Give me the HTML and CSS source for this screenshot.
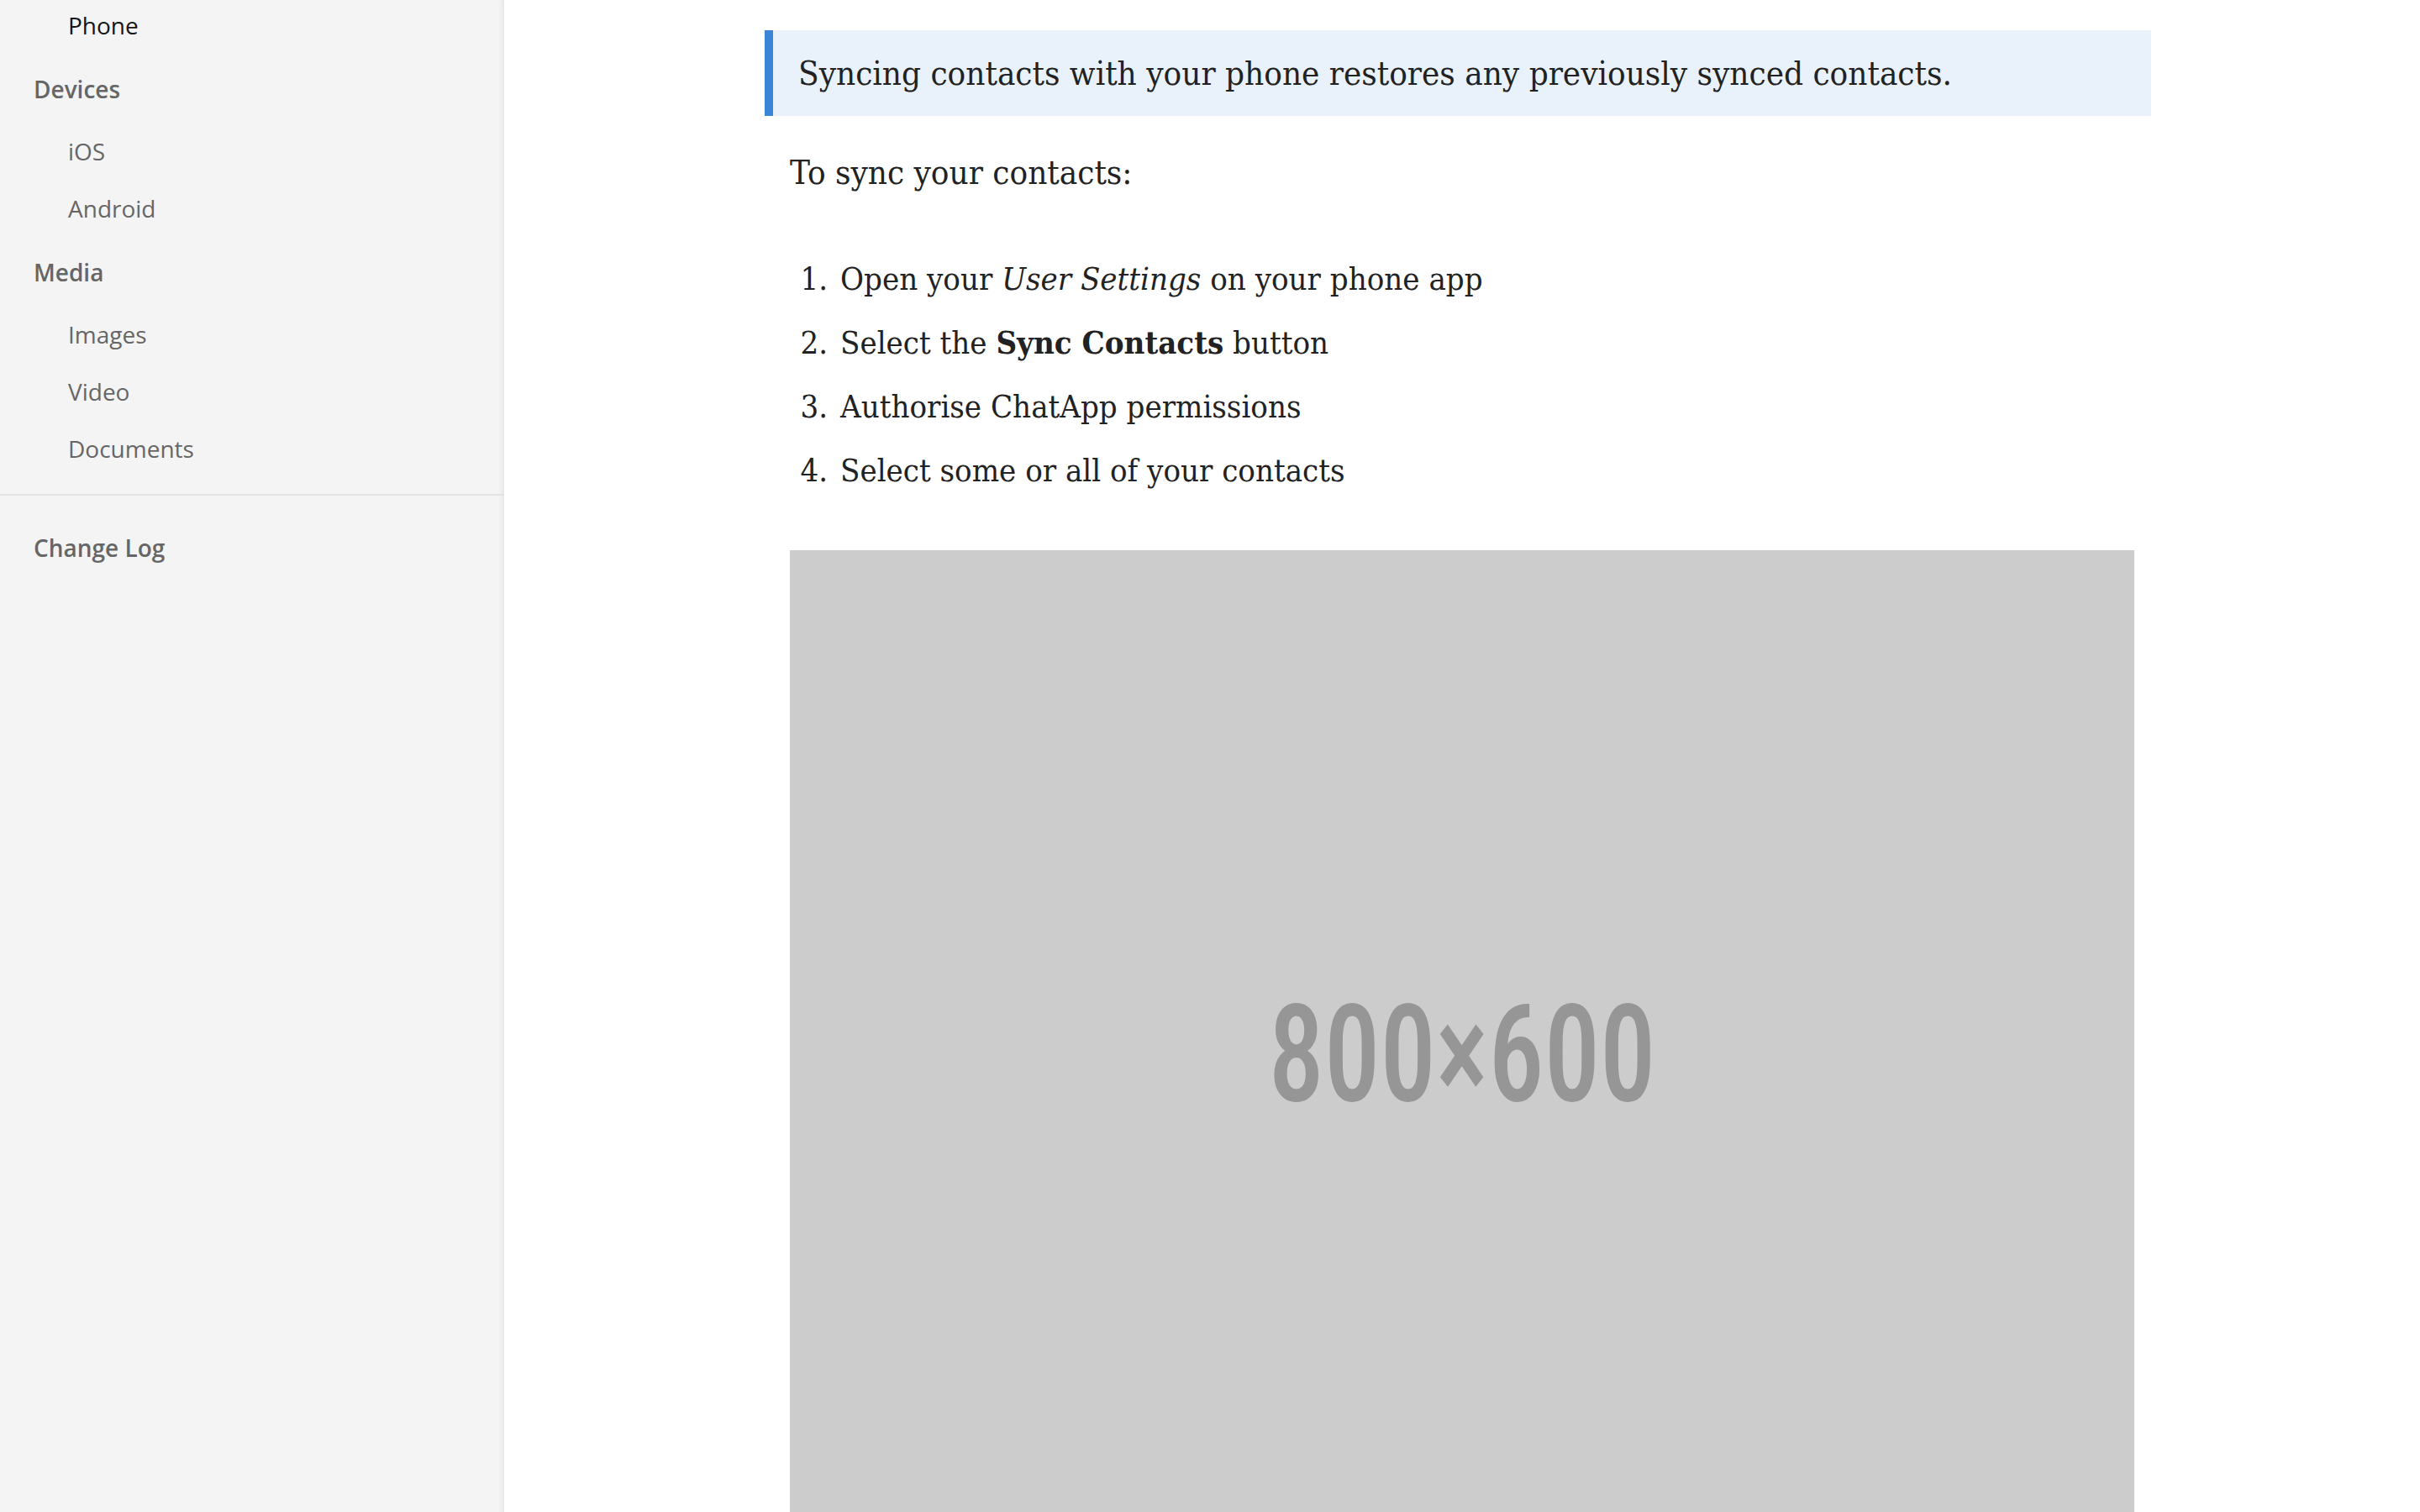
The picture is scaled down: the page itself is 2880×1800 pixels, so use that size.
FILE: index.html
```html
<!DOCTYPE html>
<html lang="en">
<head>
<meta charset="utf-8">
<title>ChatApp Docs – Contacts</title>
<link rel="stylesheet" href="styles.css">
</head>
<body>
<div class="layout">
  <aside class="sidebar">
    <nav class="nav">
      <ul class="nav-list">
        <li class="nav-item is-active">Phone</li>
      </ul>
      <div class="nav-section">
        <div class="nav-heading">Devices</div>
        <ul class="nav-list">
          <li class="nav-item">iOS</li>
          <li class="nav-item">Android</li>
        </ul>
      </div>
      <div class="nav-section">
        <div class="nav-heading">Media</div>
        <ul class="nav-list">
          <li class="nav-item">Images</li>
          <li class="nav-item">Video</li>
          <li class="nav-item">Documents</li>
        </ul>
      </div>
    </nav>
    <div class="nav-footer">
      <div class="nav-heading">Change Log</div>
    </div>
  </aside>
  <main class="main">
    <article class="content">
      <div class="callout">Syncing contacts with your phone restores any previously synced contacts.</div>
      <p class="lead">To sync your contacts:</p>
      <ol class="steps">
        <li class="step">Open your <em>User Settings</em> on your phone app</li>
        <li class="step">Select the <strong>Sync Contacts</strong> button</li>
        <li class="step">Authorise ChatApp permissions</li>
        <li class="step">Select some or all of your contacts</li>
      </ol>
      <div class="placeholder"><span class="placeholder-label">800×600</span></div>
    </article>
  </main>
</div>
</body>
</html>
```
FILE: styles.css
```css
html, body {
  margin: 0;
  padding: 0;
  height: 100%;
  overflow: hidden;
  background: #ffffff;
}

.layout {
  display: flex;
  min-height: 100vh;
}

/* ---------- Sidebar ---------- */
.sidebar {
  width: 600px;
  flex-shrink: 0;
  background: #f4f4f4;
  box-shadow: inset -6px 0 6px -4px rgba(0, 0, 0, 0.07);
  font-family: "Open Sans", "Noto Sans", sans-serif;
  font-size: 28px;
  color: #666666;
}

.nav {
  margin-top: -4px;
  padding-bottom: 20px;
}

.nav-list {
  list-style: none;
  margin: 0;
  padding: 0;
}

.nav-item {
  padding: 14px 0 14px 81px;
  line-height: 40px;
  color: #666666;
}

.nav-item.is-active {
  color: #151515;
}

.nav-heading {
  padding: 22px 0 20px 40px;
  line-height: 40px;
  font-weight: 600;
  color: #666666;
}

.nav-footer {
  border-top: 2px solid #e3e3e3;
  padding-top: 20px;
}

/* ---------- Main ---------- */
.main {
  flex: 1;
  display: flex;
  justify-content: center;
  padding-top: 36px;
  background: #ffffff;
}

.content {
  width: 1600px;
  font-family: "DejaVu Serif Condensed", "DejaVu Serif", "Liberation Serif", serif;
  font-stretch: condensed;
  color: #222222;
}

.callout {
  margin: 0 -20px 0 -30px;
  padding: 19px 30px;
  background: #e9f2fa;
  border-left: 10px solid #3a85d5;
  font-size: 40px;
  line-height: 64px;
}

.lead {
  margin: 35px 0 0;
  font-size: 40px;
  line-height: 64px;
}

.steps {
  list-style: none;
  counter-reset: step;
  margin: 66px 0 0;
  padding: 0;
}

.step {
  counter-increment: step;
  font-size: 38px;
  line-height: 58px;
}

.step + .step {
  margin-top: 18px;
}

.step::before {
  content: counter(step) ".";
  display: inline-block;
  width: 45px;
  margin-right: 15px;
  text-align: right;
}

.step strong {
  font-weight: 700;
}

.placeholder {
  margin-top: 66px;
  height: 1200px;
  background: #cccccc;
  display: flex;
  align-items: center;
  justify-content: center;
}

.placeholder-label {
  display: inline-block;
  font-family: Roboto, "Liberation Sans", sans-serif;
  font-weight: 500;
  font-size: 162px;
  line-height: 1;
  color: #969696;
  transform: scaleX(0.82);
}
```
